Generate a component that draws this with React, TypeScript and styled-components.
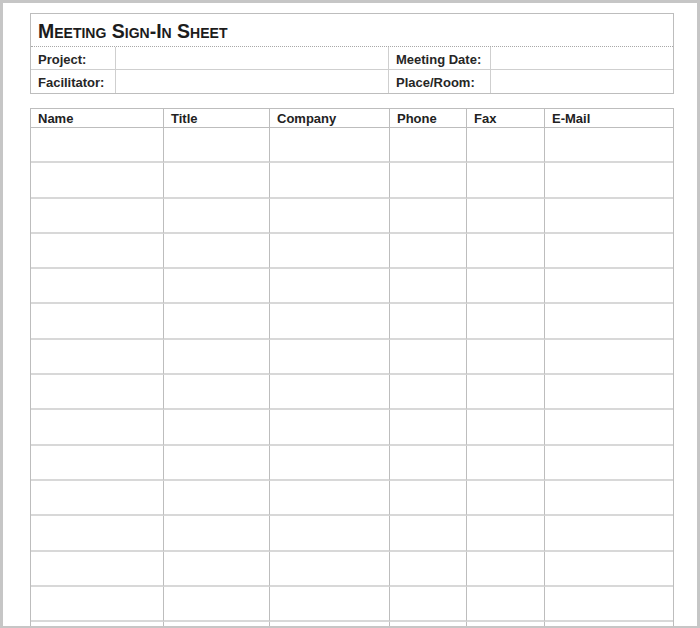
import React from "react";
import styled, { createGlobalStyle } from "styled-components";

const Global = createGlobalStyle`
  html, body { margin: 0; padding: 0; background: #ffffff; }
  body { font-family: "Liberation Sans", Arial, sans-serif; }
  * { box-sizing: border-box; }
`;

const Frame = styled.div`
  width: 700px;
  height: 628px;
  border-style: solid;
  border-color: #c6c6c6;
  border-width: 3px 3px 2px 3px;
  background: #ffffff;
  overflow: hidden;
  padding: 10px 0 0 27px;
  display: flex;
  flex-direction: column;
  gap: 14px;
`;

const InfoBox = styled.div`
  width: 644px;
  border: 1px solid #bdbdbd;
  display: flex;
  flex-direction: column;
`;

const TitleRow = styled.div`
  height: 33px;
  border-bottom: 1px dotted #a8a8a8;
  padding: 6px 0 0 7px;
  font-size: 19.5px;
  line-height: 22px;
  font-weight: bold;
  font-variant: small-caps;
  color: #1c1c1c;
`;

const InfoGrid = styled.div`
  display: grid;
  grid-template-columns: 85px 273px 102px 182px;
  grid-auto-rows: 23px;
  border-right: 1px dotted #bdbdbd;
  margin-right: -1px;
`;

const InfoCell = styled.div<{ $last?: boolean; $end?: boolean }>`
  border-bottom: ${(p) => (p.$last ? "none" : "1px solid #cfcfcf")};
  border-right: ${(p) => (p.$end ? "none" : "1px solid #cfcfcf")};
  padding: 5px 0 0 7px;
  font-size: 13px;
  font-weight: bold;
  color: #262626;
  white-space: nowrap;
`;

const SheetGrid = styled.div`
  width: 644px;
  border: 1px solid #bdbdbd;
  border-bottom: none;
  display: grid;
  grid-template-columns: 133px 106px 120px 77px 78px 128px;
`;

const HeadCell = styled.div<{ $end?: boolean }>`
  height: 19px;
  border-bottom: 1px solid #bdbdbd;
  border-right: ${(p) => (p.$end ? "none" : "1px solid #bdbdbd")};
  padding: 2px 0 0 7px;
  font-size: 13px;
  font-weight: bold;
  color: #222222;
  white-space: nowrap;
`;

const BodyCell = styled.div<{ $end?: boolean }>`
  height: 35.3px;
  border-bottom: 2px solid #d8d8d8;
  border-right: ${(p) => (p.$end ? "none" : "1px solid #bdbdbd")};
`;

const columns = ["Name", "Title", "Company", "Phone", "Fax", "E-Mail"];
const rows = Array.from({ length: 15 }, (_, i) => i);

export default function App() {
  return (
    <>
      <Global />
      <Frame>
        <InfoBox>
          <TitleRow>Meeting Sign-In Sheet</TitleRow>
          <InfoGrid>
            <InfoCell>Project:</InfoCell>
            <InfoCell />
            <InfoCell>Meeting Date:</InfoCell>
            <InfoCell $end />
            <InfoCell $last>Facilitator:</InfoCell>
            <InfoCell $last />
            <InfoCell $last>Place/Room:</InfoCell>
            <InfoCell $last $end />
          </InfoGrid>
        </InfoBox>
        <SheetGrid>
          {columns.map((c, i) => (
            <HeadCell key={c} $end={i === columns.length - 1}>
              {c}
            </HeadCell>
          ))}
          {rows.map((r) =>
            columns.map((c, i) => (
              <BodyCell key={`${r}-${c}`} $end={i === columns.length - 1} />
            ))
          )}
        </SheetGrid>
      </Frame>
    </>
  );
}
